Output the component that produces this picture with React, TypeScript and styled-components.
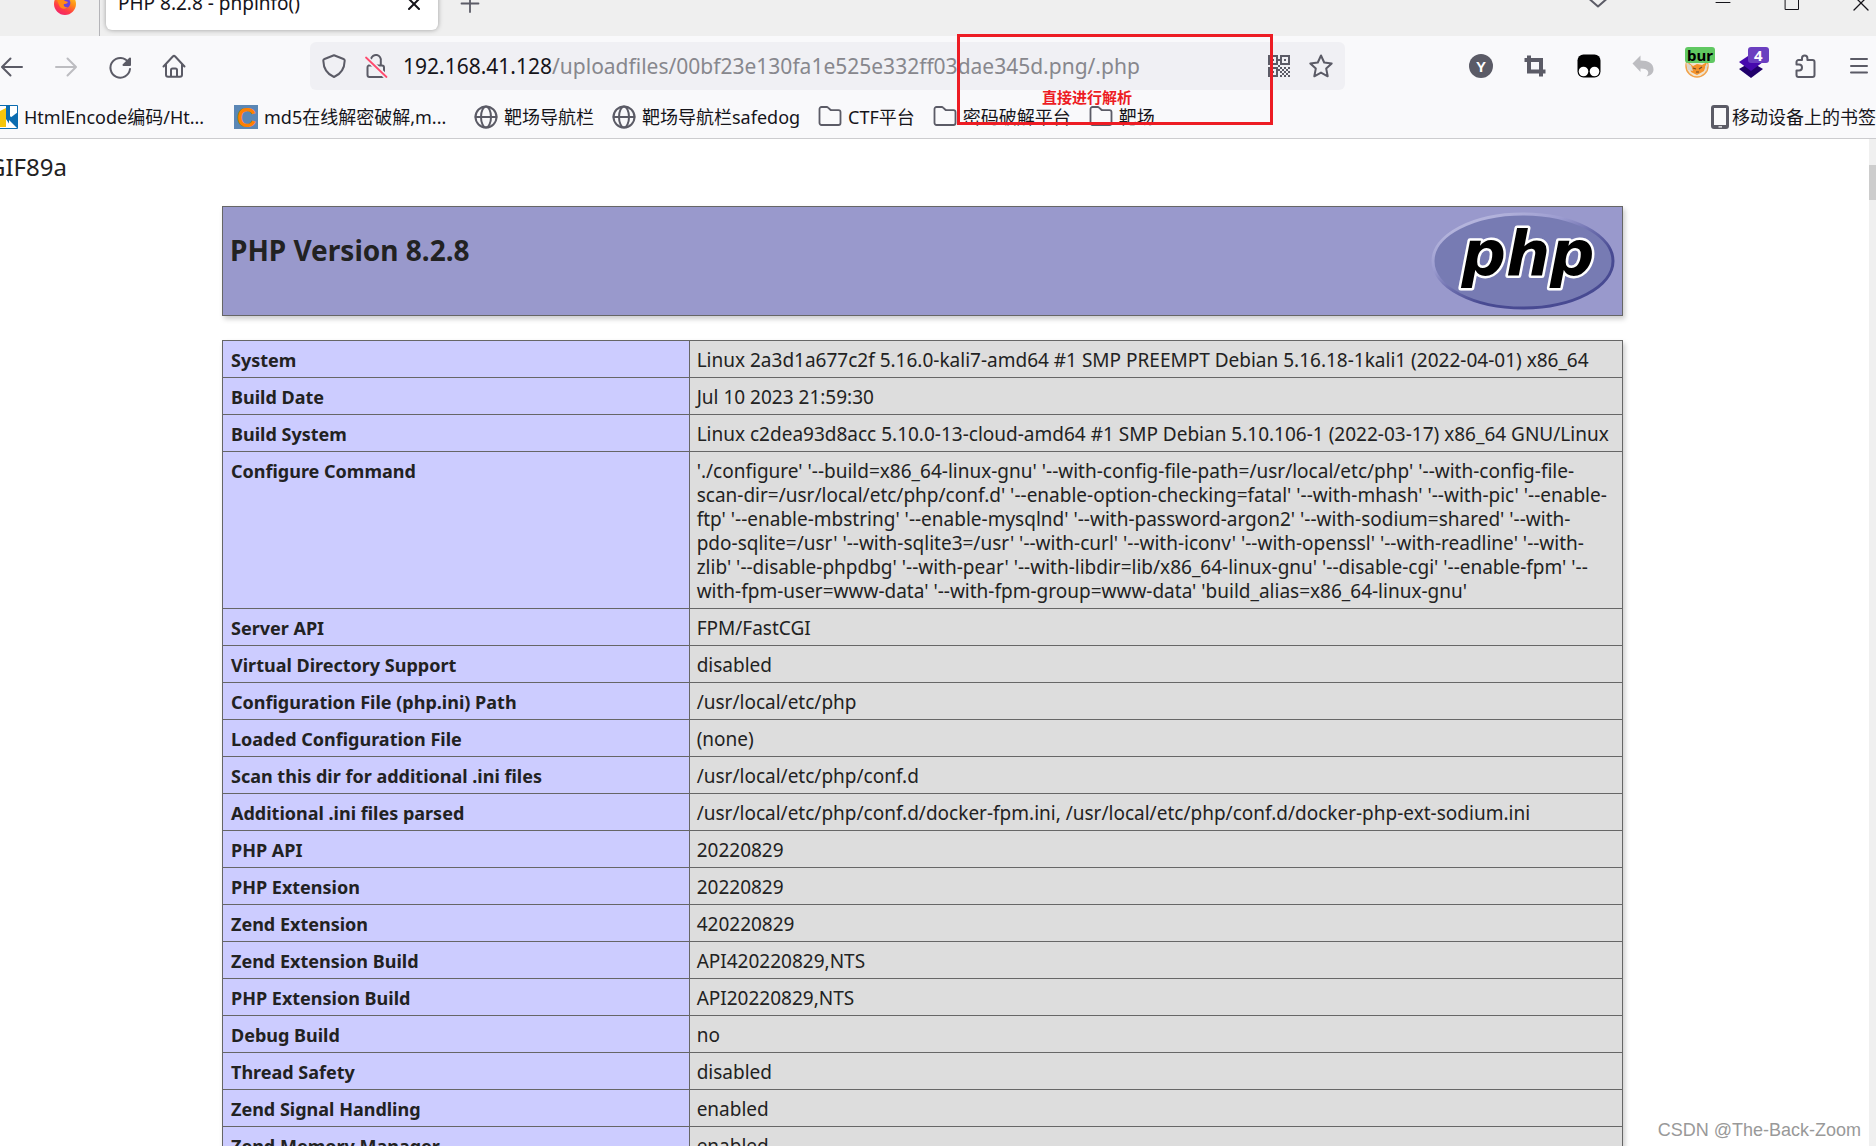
import React from 'react';
import styled, { createGlobalStyle } from 'styled-components';

const LATIN = '"Noto Sans", "Open Sans", "Noto Sans CJK SC", sans-serif';
const CJK = '"Noto Sans CJK SC", "Noto Sans", sans-serif';
const ICON = '#5b5b66';

const GlobalStyle = createGlobalStyle`
  *, *::before, *::after { box-sizing: border-box; }
  body { margin: 0; background: #fff; font-family: ${LATIN}; color: #15141a; overflow: hidden; }
  button { border: 0; padding: 0; background: none; font: inherit; color: inherit; }
  svg { display: block; overflow: visible; flex: none; }
`;

const Browser = styled.div`
  position: relative;
  display: flex;
  flex-direction: column;
  height: 100vh;
  overflow: hidden;
`;

/* ---------- tab strip ---------- */

const TabStrip = styled.header`
  display: flex;
  align-items: flex-end;
  height: 36px;
  overflow: hidden;
  background: #efefef;
`;

const TabStripInner = styled.div`
  display: flex;
  align-items: center;
  width: 100%;
  height: 66px;
  flex: none;
`;

const PinnedTab = styled.div`
  display: flex;
  align-items: center;
  justify-content: flex-end;
  width: 100px;
  height: 100%;
  padding-right: 22px;
  border-right: 1px solid #b4b4b8;
`;

const Tab = styled.div`
  display: flex;
  align-items: center;
  justify-content: space-between;
  width: 332px;
  height: 54px;
  margin-left: 6px;
  padding: 0 12px;
  border-radius: 6px;
  background: #fff;
  box-shadow: 0 0 5px rgba(0, 0, 0, 0.35);
  font-size: 19px;
  line-height: 24px;
`;

const IconButton = styled.button<{ $tone?: 'dim' | 'strong' }>`
  position: relative;
  display: flex;
  align-items: center;
  justify-content: center;
  width: 24px;
  height: 24px;
  flex: none;
  color: ${(p) => (p.$tone === 'dim' ? '#bdbdc1' : p.$tone === 'strong' ? '#15141a' : ICON)};
`;

const NewTab = styled(IconButton)`
  margin-left: 20px;
`;

const WindowControls = styled.div`
  display: flex;
  align-items: center;
  gap: 45px;
  margin-left: auto;
  padding-right: 3px;

  button:first-child { margin-right: 56px; }
`;

/* ---------- navigation bar ---------- */

const Toolbar = styled.nav`
  display: flex;
  align-items: center;
  height: 60px;
  padding-right: 5px;
  background: #f9f9fb;
`;

const ButtonGroup = styled.div`
  display: flex;
  align-items: center;
  gap: 30px;
  flex: none;
`;

const AddressBar = styled.form`
  display: flex;
  align-items: center;
  flex: 1;
  min-width: 0;
  height: 48px;
  margin: 0 124px;
  padding: 0 12px;
  border-radius: 6px;
  background: #f0f0f4;
  font-size: 21px;
  line-height: 32px;
`;

const SiteButtons = styled.div`
  display: flex;
  gap: 18px;
  margin-right: 15px;
`;

const Host = styled.label`
  color: #15141a;
`;

const PathInput = styled.input`
  flex: 1;
  min-width: 0;
  padding: 0;
  border: 0;
  outline: 0;
  background: none;
  color: #87878d;
  font: inherit;
`;

const PageActions = styled.div`
  display: flex;
  gap: 18px;
`;

const Badge = styled.span<{ $bg: string; $fg: string; $left: number; $pad: number }>`
  position: absolute;
  top: -7px;
  left: ${(p) => p.$left}px;
  padding: 0 ${(p) => p.$pad}px;
  border-radius: 3px;
  background: ${(p) => p.$bg};
  color: ${(p) => p.$fg};
  font-size: 15px;
  font-weight: 700;
  line-height: 16px;
`;

/* ---------- bookmarks bar ---------- */

const BookmarksBar = styled.nav`
  display: flex;
  align-items: center;
  gap: 18px;
  height: 43px;
  margin-left: -6px;
  border-bottom: 1px solid #cccccf;
  background: #f9f9fb;
  font-size: 18px;
  line-height: 24px;
  white-space: nowrap;
`;

const Bookmark = styled.a<{ $end?: boolean }>`
  display: flex;
  align-items: center;
  gap: ${(p) => (p.$end ? 0 : 6)}px;
  flex: none;
  margin-left: ${(p) => (p.$end ? 'auto' : 0)};
  color: #15141a;
  text-decoration: none;
`;

const BookmarkIcon = styled.span`
  color: ${ICON};
`;

const BookmarkLabel = styled.span<{ $wide?: boolean }>`
  width: ${(p) => (p.$wide ? '192px' : 'auto')};
`;

/* ---------- red call-out ---------- */

const Callout = styled.div`
  position: absolute;
  top: 34px;
  left: 957px;
  width: 316px;
  height: 91px;
  border: 3px solid #ed1c24;
  pointer-events: none;
`;

const CalloutText = styled.span`
  position: absolute;
  top: 50px;
  left: 82px;
  color: #ed1c24;
  font-family: ${CJK};
  font-size: 15px;
  font-weight: 700;
  line-height: 20px;
  white-space: nowrap;
`;

/* ---------- page ---------- */

const Viewport = styled.div`
  display: flex;
  flex: 1;
  min-height: 0;
  overflow: hidden;
`;

const Page = styled.main`
  flex: 1;
  min-width: 0;
  margin-left: -24px;
  padding: 12px;
  color: #222;
`;

const Signature = styled.div`
  margin-bottom: 23px;
  font-size: 24px;
  line-height: 32px;
`;

const Banner = styled.section`
  display: flex;
  justify-content: space-between;
  max-width: 1401px;
  height: 110px;
  margin: 0 auto 24px;
  padding: 6px 7px;
  border: 1px solid #666;
  background: #9999cc;
  box-shadow: 2px 3px 5px #ccc;
`;

const Title = styled.h1`
  margin: 19px 0 0;
  font-size: 28px;
  font-weight: 700;
  line-height: 36px;
`;

const InfoTable = styled.table`
  width: 100%;
  max-width: 1401px;
  margin: 0 auto;
  border-collapse: collapse;
  table-layout: fixed;
  box-shadow: 2px 3px 5px #ccc;
  line-height: 24px;
`;

const Name = styled.th`
  width: calc(100% / 3);
  padding: 7px 8px 5px;
  border: 1px solid #666;
  background: #ccccff;
  text-align: left;
  vertical-align: top;
  font-size: 18px;
  font-weight: 700;
`;

const Value = styled.td`
  padding: 7px 7px 5px;
  border: 1px solid #666;
  background: #ddd;
  vertical-align: top;
  font-size: 19px;
  white-space: pre-line;
`;

const ScrollTrack = styled.div`
  width: 7px;
  flex: none;
  padding-top: 26px;
  background: #f0f0f0;
`;

const ScrollThumb = styled.div`
  height: 35px;
  background: #cdcdcd;
`;

const Watermark = styled.div`
  position: absolute;
  right: 15px;
  bottom: 4px;
  color: #999;
  font-family: "Liberation Sans", Arial, sans-serif;
  font-size: 18px;
  line-height: 24px;
`;

/* ---------- drawings ---------- */

type SvgProps = { children: React.ReactNode; w?: number };

const Line = ({ children, w = 2 }: SvgProps) => (
  <svg width="24" height="24" viewBox="0 0 24 24" fill="none" stroke="currentColor" strokeWidth={w} strokeLinecap="round" strokeLinejoin="round" aria-hidden="true">
    {children}
  </svg>
);

const FirefoxIcon = () => (
  <svg width="24" height="24" viewBox="0 0 24 24" aria-hidden="true">
    <defs>
      <linearGradient id="fx" x1="0.8" y1="0" x2="0.3" y2="1">
        <stop offset="0" stopColor="#ffe226" />
        <stop offset="0.45" stopColor="#ff8a16" />
        <stop offset="0.75" stopColor="#ff3b47" />
        <stop offset="1" stopColor="#f0246c" />
      </linearGradient>
    </defs>
    <path d="M14 0c3 2 4 3 5 5 3 2 4 5 4 8 0 6-5 11-11 11S1 19 1 13c0-3 1-5 2-7l2-2 2 2c2-1 4-3 7-6z" fill="url(#fx)" />
    <circle cx="12" cy="12" r="5.4" fill="#6a43d9" />
    <path d="M4 9c3-2 6-1 8 1l3 1c-1 2-3 2-4 2-1 2 1 4 4 3-3 3-8 2-9-2z" fill="#ff8a16" />
  </svg>
);

const Globe = () => (
  <Line>
    <circle cx="12" cy="12" r="10.500" />
    <ellipse cx="12" cy="12" rx="5" ry="10.500" />
    <path d="M1.500 12h21" />
  </Line>
);

const Folder = () => (
  <Line w={1.8}>
    <path d="M1.500 18v-14a2 2 0 0 1 2-2h5.200a2 2 0 0 1 1.400.6l2 1.900a2 2 0 0 0 1.400.6h7a2 2 0 0 1 2 2v10.900a2 2 0 0 1-2 2h-17a2 2 0 0 1-2-2z" />
  </Line>
);

const EncodeIcon = () => (
  <svg width="24" height="24" viewBox="0 0 24 24" aria-hidden="true">
    <path d="M.5.5h23v23H.5z" fill="#fff" stroke="#0b6cb0" />
    <path d="M2 8l10-5v19H6V11l-4 3z" fill="#f5c60c" />
    <path d="M12 1h4v10l7 8v4h-5L12 14z" fill="#0b6cb0" />
    <path d="M16 13l8-6v16z" fill="#0b6cb0" />
    <path d="M15 15l8 8h-8z" fill="#fff" />
  </svg>
);

const CIcon = () => (
  <svg width="24" height="24" viewBox="0 0 24 24" aria-hidden="true">
    <rect width="24" height="24" fill="#5b87b5" />
    <text x="12.500" y="22" textAnchor="middle" fontFamily="Liberation Sans" fontWeight="700" fontSize="27" fill="#ff8000">C</text>
  </svg>
);

const PhoneIcon = () => (
  <svg width="24" height="24" viewBox="0 0 24 24" aria-hidden="true">
    <path fillRule="evenodd" d="M6 0h12a3 3 0 0 1 3 3v18a3 3 0 0 1-3 3H6a3 3 0 0 1-3-3V3a3 3 0 0 1 3-3zM6 3v17h12V3zM10.500 21.200h3.500v1.300h-3.500z" fill={ICON} />
  </svg>
);

const qrDark = [
  '11111011111',
  '10001010001',
  '10101110101',
  '10001010001',
  '11111011111',
  '00000100000',
  '11111010101',
  '10001101010',
  '10101010101',
  '10001001010',
  '11111010101',
];

const QrIcon = () => (
  <svg width="22" height="22" viewBox="0 0 11 11" shapeRendering="crispEdges" aria-hidden="true">
    {qrDark.flatMap((row, y) =>
      [...row].map((c, x) => (c === '1' ? <rect key={`${x}-${y}`} x={x} y={y} width="1" height="1" fill={ICON} /> : null)),
    )}
  </svg>
);

const PhpLogo = () => (
  <svg width="184" height="97" viewBox="0 0 184 97" role="img" aria-label="PHP logo">
    <defs>
      <linearGradient id="rim" x1="0.2" y1="0.1" x2="0.75" y2="0.8">
        <stop offset="0" stopColor="#b4b4dc" />
        <stop offset="0.3" stopColor="#9c9cd0" />
        <stop offset="0.55" stopColor="#6a6cac" />
        <stop offset="0.8" stopColor="#484a92" />
      </linearGradient>
    </defs>
    <ellipse cx="92" cy="48" rx="90" ry="47" fill="#777bb3" stroke="url(#rim)" strokeWidth="3" />
    <text x="97" y="62" textAnchor="middle" fontFamily="DejaVu Sans" fontWeight="700" fontStyle="italic" fontSize="62" fill="#000" stroke="#fff" strokeWidth="5" strokeLinejoin="round" paintOrder="stroke">php</text>
  </svg>
);

/* ---------- data ---------- */

const bookmarks = [
  { label: 'HtmlEncode编码/Ht...', icon: <EncodeIcon />, wide: true },
  { label: 'md5在线解密破解,m...', icon: <CIcon />, wide: true },
  { label: '靶场导航栏', icon: <Globe /> },
  { label: '靶场导航栏safedog', icon: <Globe /> },
  { label: 'CTF平台', icon: <Folder /> },
  { label: '密码破解平台', icon: <Folder /> },
  { label: '靶场', icon: <Folder /> },
];

const configure = [
  "'./configure' '--build=x86_64-linux-gnu' '--with-config-file-path=/usr/local/etc/php' '--with-config-file-",
  "scan-dir=/usr/local/etc/php/conf.d' '--enable-option-checking=fatal' '--with-mhash' '--with-pic' '--enable-",
  "ftp' '--enable-mbstring' '--enable-mysqlnd' '--with-password-argon2' '--with-sodium=shared' '--with-",
  "pdo-sqlite=/usr' '--with-sqlite3=/usr' '--with-curl' '--with-iconv' '--with-openssl' '--with-readline' '--with-",
  "zlib' '--disable-phpdbg' '--with-pear' '--with-libdir=lib/x86_64-linux-gnu' '--disable-cgi' '--enable-fpm' '--",
  "with-fpm-user=www-data' '--with-fpm-group=www-data' 'build_alias=x86_64-linux-gnu'",
].join('\n');

const info: [string, string][] = [
  ['System', 'Linux 2a3d1a677c2f 5.16.0-kali7-amd64 #1 SMP PREEMPT Debian 5.16.18-1kali1 (2022-04-01) x86_64'],
  ['Build Date', 'Jul 10 2023 21:59:30'],
  ['Build System', 'Linux c2dea93d8acc 5.10.0-13-cloud-amd64 #1 SMP Debian 5.10.106-1 (2022-03-17) x86_64 GNU/Linux'],
  ['Configure Command', configure],
  ['Server API', 'FPM/FastCGI'],
  ['Virtual Directory Support', 'disabled'],
  ['Configuration File (php.ini) Path', '/usr/local/etc/php'],
  ['Loaded Configuration File', '(none)'],
  ['Scan this dir for additional .ini files', '/usr/local/etc/php/conf.d'],
  ['Additional .ini files parsed', '/usr/local/etc/php/conf.d/docker-fpm.ini, /usr/local/etc/php/conf.d/docker-php-ext-sodium.ini'],
  ['PHP API', '20220829'],
  ['PHP Extension', '20220829'],
  ['Zend Extension', '420220829'],
  ['Zend Extension Build', 'API420220829,NTS'],
  ['PHP Extension Build', 'API20220829,NTS'],
  ['Debug Build', 'no'],
  ['Thread Safety', 'disabled'],
  ['Zend Signal Handling', 'enabled'],
  ['Zend Memory Manager', 'enabled'],
];

export default function App() {
  return (
    <Browser>
      <GlobalStyle />
      <TabStrip>
        <TabStripInner>
          <PinnedTab><FirefoxIcon /></PinnedTab>
          <Tab>
            <span>PHP 8.2.8 - phpinfo()</span>
            <IconButton aria-label="Close tab" $tone="strong">
              <Line><path d="M7 8l10 10M17 8L7 18" /></Line>
            </IconButton>
          </Tab>
          <NewTab aria-label="New tab"><Line w={1.8}><path d="M12 4v17M3.500 12.500h17" /></Line></NewTab>
          <WindowControls>
            <IconButton aria-label="List all tabs"><Line><path d="M4 8.500l8 7 8-7" /></Line></IconButton>
            <IconButton aria-label="Minimize" $tone="strong"><Line w={1}><path d="M5 11.500h14" /></Line></IconButton>
            <IconButton aria-label="Maximize" $tone="strong"><Line w={1}><path d="M5.500 5.500h13v13h-13z" /></Line></IconButton>
            <IconButton aria-label="Close window" $tone="strong"><Line w={1.3}><path d="M5 5l14 14M19 5L5 19" /></Line></IconButton>
          </WindowControls>
        </TabStripInner>
      </TabStrip>

      <Toolbar>
        <ButtonGroup>
          <IconButton aria-label="Back"><Line><path d="M22 13H2.500M10.500 4.500L2 13l8.500 8.500" /></Line></IconButton>
          <IconButton aria-label="Forward" $tone="dim"><Line><path d="M2 13h19.500M13.500 4.500L22 13l-8.500 8.500" /></Line></IconButton>
          <IconButton aria-label="Reload">
            <Line>
              <path d="M20.500 8.500A9.800 9.800 0 1 0 22 15" />
              <path d="M22 4.500V11h-6.500z" fill="currentColor" />
            </Line>
          </IconButton>
          <IconButton aria-label="Home">
            <Line><path d="M1.500 12.500L10.800 2.500a1.700 1.700 0 0 1 2.400 0l9.300 10M4 10.500v10.300a2 2 0 0 0 2 2h12a2 2 0 0 0 2-2V10.500M9 22.500v-6.500a1.500 1.500 0 0 1 1.500-1.500h3a1.500 1.500 0 0 1 1.500 1.500v6.500" /></Line>
          </IconButton>
        </ButtonGroup>

        <AddressBar onSubmit={(e) => e.preventDefault()}>
          <SiteButtons>
            <IconButton type="button" aria-label="Tracking protection">
              <Line><path d="M12 1.200L21.500 5c.8.300 1.200.800 1.200 1.600C22.500 14 19 20 12 23 5 20 1.500 14 1.300 6.600c0-.8.400-1.300 1.200-1.600z" /></Line>
            </IconButton>
            <IconButton type="button" aria-label="Connection is not secure">
              <Line>
                <path d="M4.500 11.500h13.500a2 2 0 0 1 2 2v7.500a2 2 0 0 1-2 2H5.500a2 2 0 0 1-2-2v-7.500a2 2 0 0 1 1-2zM7 5a5 5 0 0 1 9.800 2v4" />
                <path d="M2 3.500l20.500 19.500" stroke="#f0f0f4" strokeWidth="5" />
                <path d="M2 3.500l20.500 19.500" stroke="#ff4b6e" strokeWidth="1.800" />
              </Line>
            </IconButton>
          </SiteButtons>
          <Host htmlFor="address">192.168.41.128</Host>
          <PathInput id="address" defaultValue="/uploadfiles/00bf23e130fa1e525e332ff03dae345d.png/.php" />
          <PageActions>
            <IconButton type="button" aria-label="QR code"><QrIcon /></IconButton>
            <IconButton type="button" aria-label="Bookmark this page">
              <Line><path d="M12 1.500l3.200 7 7.500.9-5.500 5.200 1.500 7.700L12 18.600l-6.700 3.700 1.500-7.700L1.300 9.400l7.500-.9z" /></Line>
            </IconButton>
          </PageActions>
        </AddressBar>

        <ButtonGroup>
          <IconButton aria-label="Y">
            <svg width="24" height="24" viewBox="0 0 24 24" aria-hidden="true">
              <circle cx="12" cy="12" r="12" fill={ICON} />
              <text x="12" y="17.500" textAnchor="middle" fontFamily="Liberation Sans" fontWeight="700" fontSize="15" fill="#fff">Y</text>
            </svg>
          </IconButton>
          <IconButton aria-label="Crop">
            <svg width="24" height="24" viewBox="0 0 24 24" fill="none" stroke={ICON} strokeWidth="4" aria-hidden="true">
              <path d="M6 1.500V17.500H22.500M1.500 6H18V22.500" />
            </svg>
          </IconButton>
          <IconButton aria-label="Tampermonkey">
            <svg width="24" height="24" viewBox="0 0 24 24" aria-hidden="true">
              <rect x="0.500" y="0.500" width="23" height="23" rx="6" fill="#000" />
              <circle cx="6.500" cy="17.500" r="4.800" fill="#fff" />
              <circle cx="17.500" cy="17.500" r="4.800" fill="#fff" />
            </svg>
          </IconButton>
          <IconButton aria-label="Undo" $tone="dim">
            <svg width="24" height="24" viewBox="0 0 24 24" aria-hidden="true">
              <path d="M1.500 9.500L9.500 1.500v5c8 0 13 3 13 9 0 3.500-2.500 6-7 7 3-3 3-8-6-8v3.500z" fill="currentColor" />
            </svg>
          </IconButton>
          <IconButton aria-label="FoxyProxy">
            <svg width="24" height="24" viewBox="0 0 24 24" aria-hidden="true">
              <circle cx="12" cy="12" r="11" fill="#efe4d0" stroke="#f2a24a" strokeWidth="1.500" />
              <path d="M3 8l5 4 4-2 5 1 5-3-3 9-7 4-6-3z" fill="#f5922a" />
              <path d="M1 9l5 2 2 6-5-1zM20 12l3-2-2 8z" fill="#d8d4cc" />
              <path d="M8 14l3 1M14 15l3-2M11 18h3" stroke="#6b4a2a" strokeWidth="1.200" />
            </svg>
            <Badge $bg="#60c862" $fg="#000" $left={0} $pad={2}>bur</Badge>
          </IconButton>
          <IconButton aria-label="Wappalyzer">
            <svg width="24" height="24" viewBox="0 0 24 24" aria-hidden="true">
              <path d="M0 15l12-7 12 7-12 9z" fill="#21006b" />
              <path d="M0 8l12-8 12 8-12 9z" fill="#4608ad" />
            </svg>
            <Badge $bg="#6b3fc0" $fg="#fff" $left={9} $pad={6}>4</Badge>
          </IconButton>
          <IconButton aria-label="Extensions">
            <Line>
              <path d="M3.500 9V8a2 2 0 0 1 2-2H9V4.200a2.700 2.700 0 0 1 5.400 0V6H19.500a2 2 0 0 1 2 2v13a2 2 0 0 1-2 2h-14a2 2 0 0 1-2-2v-4.500H6a3 3 0 0 0 0-6H3.500z" />
            </Line>
          </IconButton>
          <IconButton aria-label="Menu"><Line><path d="M4 5h16M4 12h16M4 18.500h16" /></Line></IconButton>
        </ButtonGroup>
      </Toolbar>

      <BookmarksBar>
        {bookmarks.map((b) => (
          <Bookmark href="#" key={b.label}>
            <BookmarkIcon>{b.icon}</BookmarkIcon>
            <BookmarkLabel $wide={b.wide}>{b.label}</BookmarkLabel>
          </Bookmark>
        ))}
        <Bookmark href="#" $end>
          <PhoneIcon />
          <BookmarkLabel>移动设备上的书签</BookmarkLabel>
        </Bookmark>
      </BookmarksBar>

      <Viewport>
        <Page>
          <Signature>GIF89a</Signature>
          <Banner>
            <Title>PHP Version 8.2.8</Title>
            <PhpLogo />
          </Banner>
          <InfoTable>
            <tbody>
              {info.map(([name, value]) => (
                <tr key={name}>
                  <Name scope="row">{name}</Name>
                  <Value>{value}</Value>
                </tr>
              ))}
            </tbody>
          </InfoTable>
        </Page>
        <ScrollTrack><ScrollThumb /></ScrollTrack>
      </Viewport>

      <Callout><CalloutText>直接进行解析</CalloutText></Callout>
      <Watermark>CSDN @The-Back-Zoom</Watermark>
    </Browser>
  );
}
